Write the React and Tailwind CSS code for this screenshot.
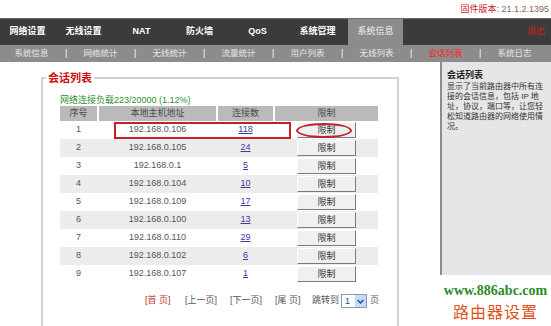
import React from 'react';

const NAV = [
  ['网络设置', 'w-[55px]'],
  ['无线设置', 'w-[57px]'],
  ['NAT', 'w-[59px]'],
  ['防火墙', 'w-[57px]'],
  ['QoS', 'w-[59px]'],
  ['系统管理', 'w-[61px]'],
];

const SUBNAV = ['系统信息', '网络统计', '无线统计', '流量统计', '用户列表', '无线列表', '会话列表', '系统日志'];

const ROWS = [
  [1, '192.168.0.106', 118],
  [2, '192.168.0.105', 24],
  [3, '192.168.0.1', 5],
  [4, '192.168.0.104', 10],
  [5, '192.168.0.109', 17],
  [6, '192.168.0.100', 13],
  [7, '192.168.0.110', 29],
  [8, '192.168.0.102', 6],
  [9, '192.168.0.107', 1],
];

const FONT = "[font-family:'Liberation_Sans','Noto_Sans_CJK_SC',sans-serif]";

function LimitButton() {
  return (
    <button className="w-[59px] h-[16px] bg-[#f0f0f0] border border-t-white border-l-white border-r-[#7a7a7a] border-b-[#7a7a7a] text-[9px] leading-[14px] text-[#333]">
      限制
    </button>
  );
}

export default function App() {
  return (
    <div className={`w-[551px] h-[326px] overflow-hidden bg-white ${FONT}`}>
      {/* version */}
      <div className="h-[18px] flex items-center justify-end pr-[2px] text-[9px] leading-[18px]">
        <span className="text-[#cc2222]">固件版本</span>
        <span className="text-[#8a6060]">: 21.1.2.1395</span>
      </div>

      {/* main nav */}
      <div className="h-[27px] flex bg-[#3b3b3b] border-t border-[#6e6e6e]">
        {NAV.map(([t, w]) => (
          <div key={t} className={`${w} flex items-center justify-center text-white font-bold text-[9px]`}>
            {t}
          </div>
        ))}
        <div className="w-[55px] bg-[#8c8c8c] flex items-center justify-center text-[#f2f2f2] text-[9px]">
          系统信息
        </div>
        <div className="flex-1 flex items-center justify-end pr-[6px] text-[#d42020] text-[9px]">退出</div>
      </div>

      {/* sub nav */}
      <div className="h-[17px] flex items-center bg-[#8c8c8c] pl-[5px] text-[8.5px]">
        {SUBNAV.map((t, i) => (
          <React.Fragment key={t}>
            {i > 0 && <span className="w-[16px] text-center text-white">|</span>}
            <span className={`w-[53px] text-center ${t === '会话列表' ? 'text-[#ff1a1a]' : 'text-[#e6e6e6]'}`}>{t}</span>
          </React.Fragment>
        ))}
      </div>

      <div className="flex h-[264px]">
        {/* left content */}
        <div className="w-[440px]">
          <fieldset className="ml-[41px] mt-[9px] w-[358px] h-[270px] border-2 border-[#d2d2d2] pl-[17px] pt-[10px]">
            <legend className="-ml-[14px] px-[2px] text-[11px] leading-[14px] font-bold text-[#cc1111]">会话列表</legend>
            <div className="h-[11px] leading-[11px] text-[9px] text-[#2f8f2f]">网络连接负载223/20000 (1.12%)</div>

            <div className="relative w-[318px]">
              <div className="flex gap-[2px] h-[15px] text-[9px] text-[#4a4a4a]">
                <div className="w-[37px] bg-[#bababa] flex items-center justify-center">序号</div>
                <div className="w-[117px] bg-[#bababa] flex items-center justify-center">本地主机地址</div>
                <div className="w-[55px] bg-[#bababa] flex items-center justify-center">连接数</div>
                <div className="w-[103px] bg-[#bababa] flex items-center justify-center">限制</div>
              </div>
              {ROWS.map(([n, ip, c]) => (
                <div key={n} className={`flex gap-[2px] h-[18px] text-[9px] text-[#555] ${n % 2 === 0 ? 'bg-[#ececec]' : 'bg-white'}`}>
                  <div className="w-[37px] flex items-center justify-center">{n}</div>
                  <div className="w-[117px] flex items-center justify-center">{ip}</div>
                  <div className="w-[55px] flex items-center justify-center">
                    <span className="text-[#3c3c9c] underline">{c}</span>
                  </div>
                  <div className="w-[103px] flex items-center justify-center">
                    <LimitButton />
                  </div>
                </div>
              ))}
              {/* annotations */}
              <div className="absolute left-[54px] top-[16px] w-[177px] h-[17px] border-2 border-[#c4202a]" />
              <div className="absolute left-[236px] top-[17px] w-[56px] h-[15px] border-2 border-[#c4202a] rounded-[50%]" />
            </div>

            <div className="mt-[11px] ml-[85px] h-[14px] flex items-center text-[9px] text-[#555]">
              <span className="w-[40px] text-[#c03030]">[首 页]</span>
              <span className="w-[45px]">[上一页]</span>
              <span className="w-[45px]">[下一页]</span>
              <span className="w-[37px]">[尾 页]</span>
              <span className="w-[29px]">跳转到</span>
              <div className="w-[26px] h-[14px] flex border border-[#7f9db9] bg-white">
                <span className="flex-1 pl-[3px] text-[#2a4aa0] leading-[12px]">1</span>
                <span className="w-[11px] bg-[#c9daf6] flex items-center justify-center">
                  <svg width="7" height="5" viewBox="0 0 7 5">
                    <path d="M0.5 1 L3.5 4 L6.5 1" fill="none" stroke="#2b4f9c" strokeWidth="1.5" />
                  </svg>
                </span>
              </div>
              <span className="ml-[3px]">页</span>
            </div>
          </fieldset>
        </div>

        {/* right help panel */}
        <div className="w-[111px] flex flex-col">
          <div className="h-[213px] bg-[#e6e6e6] border-l-2 border-[#8c8c8c] pl-[5px] pt-[7px]">
            <div className="text-[9px] leading-[12px] font-bold text-[#222]">会话列表</div>
            <div className="mt-[1px] text-[8px] leading-[10px] text-[#333] whitespace-nowrap">
              <div>显示了当前路由器中所有连</div>
              <div>接的会话信息，包括 IP 地</div>
              <div>址，协议，端口等，让您轻</div>
              <div>松知道路由器的网络使用情</div>
              <div>况。</div>
            </div>
          </div>
          <div className="pt-[8px] text-center">
            <div className="[font-family:'Liberation_Serif',serif] font-bold text-[14px] leading-[16px] text-[#2f8a2a] whitespace-nowrap">
              www.886abc.com
            </div>
            <div className="mt-[4px] text-[16px] leading-[19px] text-[#e0521e] tracking-[1px]">路由器设置</div>
          </div>
        </div>
      </div>
    </div>
  );
}
